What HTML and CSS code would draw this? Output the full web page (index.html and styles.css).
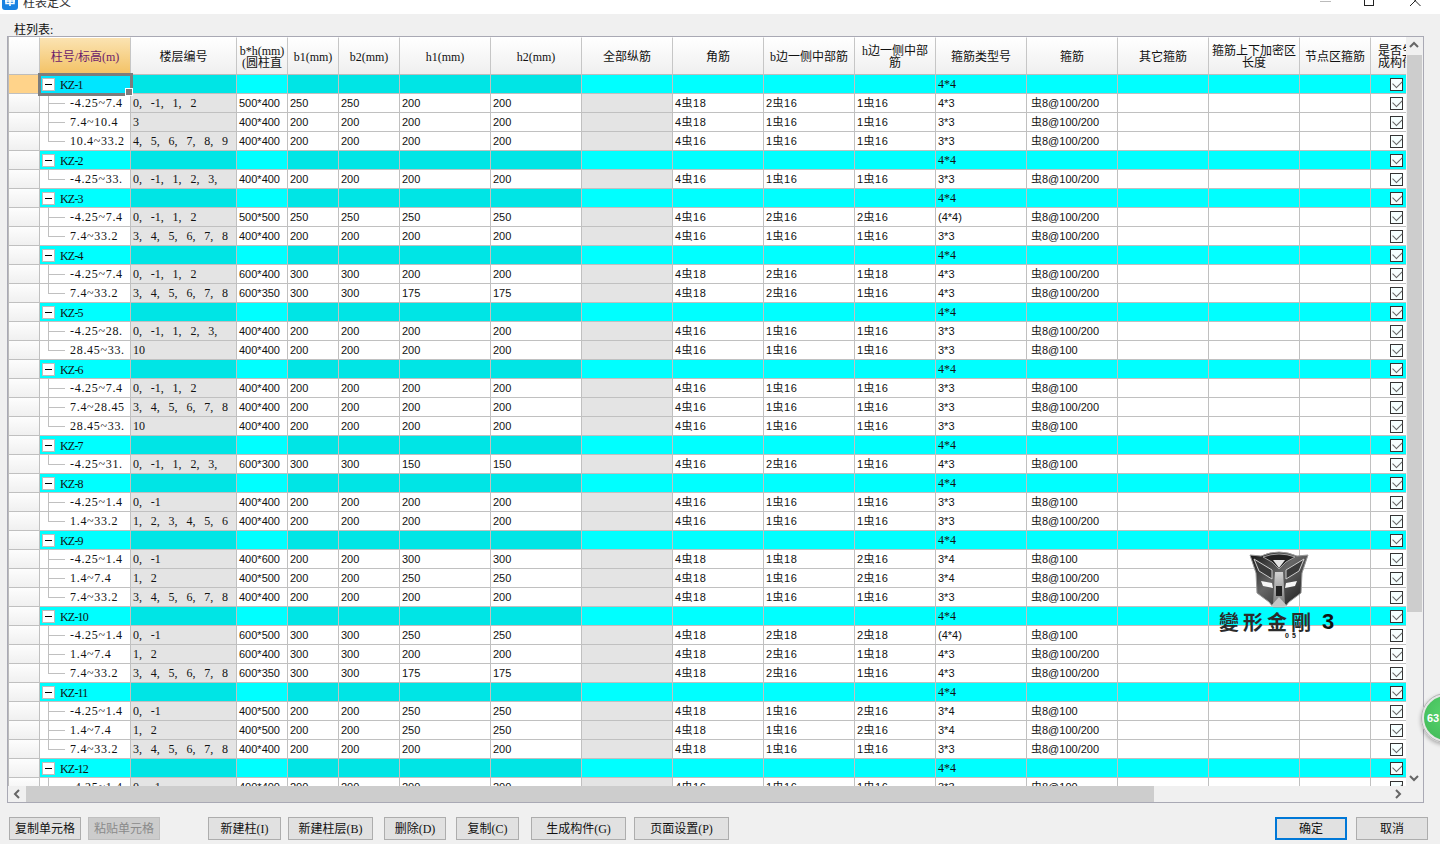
FILE: index.html
```html
<!DOCTYPE html>
<html lang="zh-CN">
<head>
<meta charset="utf-8">
<title>柱表定义</title>
<link rel="stylesheet" href="styles.css">
</head>
<body>
<header class="titlebar">
  <span class="app-icon"><svg width="16" height="16" viewBox="0 0 16 16"><rect width="16" height="16" rx="3" fill="#1a82e2"/><path d="M3 7h10M8 3v9M4 4.500h8v5H4z" fill="none" stroke="#fff" stroke-width="1.500"/></svg></span>
  <span class="title-text">柱表定义</span>
  <span class="win-controls">
    <span class="win-min"></span>
    <span class="win-max"></span>
    <svg class="win-close" width="11" height="16" viewBox="0 0 11 16"><path d="M0 5l10.500 10.500M10.500 5L0 15.500" transform="translate(0 -9.500)" fill="none" stroke="#222"/></svg>
  </span>
</header>
<div class="list-label">柱列表:</div>
<section class="frame">
  <div class="grid-view">
    <table class="sheet">
      <colgroup><col class="w31"><col class="w91"><col class="w106"><col class="w51"><col class="w51"><col class="w61"><col class="w91"><col class="w91"><col class="w91"><col class="w91"><col class="w91"><col class="w81"><col class="w91"><col class="w91"><col class="w91"><col class="w91"><col class="w71"><col class="w51"></colgroup>
      <thead><tr><th></th><th class="active-head">柱号/标高(m)</th><th>楼层编号</th><th>b*h(mm)<br>(圆柱直</th><th>b1(mm)</th><th>b2(mm)</th><th>h1(mm)</th><th>h2(mm)</th><th>全部纵筋</th><th>角筋</th><th>b边一侧中部筋</th><th>h边一侧中部<br>筋</th><th>箍筋类型号</th><th>箍筋</th><th>其它箍筋</th><th>箍筋上下加密区<br>长度</th><th>节点区箍筋</th><th>是否生<br>成构件</th></tr></thead>
      <tbody>
<tr class="g first"><th></th><td class="sel"><i class="box"></i>KZ-1</td><td></td><td></td><td></td><td></td><td></td><td></td><td></td><td></td><td></td><td></td><td>4*4</td><td></td><td></td><td></td><td></td><td><i class="cb"></i></td></tr>
<tr class="d"><th></th><td>-4.25~7.4</td><td>0, -1, 1, 2</td><td>500*400</td><td>250</td><td>250</td><td>200</td><td>200</td><td></td><td>4虫18</td><td>2虫16</td><td>1虫16</td><td>4*3</td><td>虫8@100/200</td><td></td><td></td><td></td><td><i class="cb"></i></td></tr>
<tr class="d"><th></th><td>7.4~10.4</td><td>3</td><td>400*400</td><td>200</td><td>200</td><td>200</td><td>200</td><td></td><td>4虫18</td><td>1虫16</td><td>1虫16</td><td>3*3</td><td>虫8@100/200</td><td></td><td></td><td></td><td><i class="cb"></i></td></tr>
<tr class="d l"><th></th><td>10.4~33.2</td><td>4, 5, 6, 7, 8, 9</td><td>400*400</td><td>200</td><td>200</td><td>200</td><td>200</td><td></td><td>4虫16</td><td>1虫16</td><td>1虫16</td><td>3*3</td><td>虫8@100/200</td><td></td><td></td><td></td><td><i class="cb"></i></td></tr>
<tr class="g"><th></th><td><i class="box"></i>KZ-2</td><td></td><td></td><td></td><td></td><td></td><td></td><td></td><td></td><td></td><td></td><td>4*4</td><td></td><td></td><td></td><td></td><td><i class="cb"></i></td></tr>
<tr class="d l"><th></th><td>-4.25~33.</td><td>0, -1, 1, 2, 3,</td><td>400*400</td><td>200</td><td>200</td><td>200</td><td>200</td><td></td><td>4虫16</td><td>1虫16</td><td>1虫16</td><td>3*3</td><td>虫8@100/200</td><td></td><td></td><td></td><td><i class="cb"></i></td></tr>
<tr class="g"><th></th><td><i class="box"></i>KZ-3</td><td></td><td></td><td></td><td></td><td></td><td></td><td></td><td></td><td></td><td></td><td>4*4</td><td></td><td></td><td></td><td></td><td><i class="cb"></i></td></tr>
<tr class="d"><th></th><td>-4.25~7.4</td><td>0, -1, 1, 2</td><td>500*500</td><td>250</td><td>250</td><td>250</td><td>250</td><td></td><td>4虫16</td><td>2虫16</td><td>2虫16</td><td>(4*4)</td><td>虫8@100/200</td><td></td><td></td><td></td><td><i class="cb"></i></td></tr>
<tr class="d l"><th></th><td>7.4~33.2</td><td>3, 4, 5, 6, 7, 8</td><td>400*400</td><td>200</td><td>200</td><td>200</td><td>200</td><td></td><td>4虫16</td><td>1虫16</td><td>1虫16</td><td>3*3</td><td>虫8@100/200</td><td></td><td></td><td></td><td><i class="cb"></i></td></tr>
<tr class="g"><th></th><td><i class="box"></i>KZ-4</td><td></td><td></td><td></td><td></td><td></td><td></td><td></td><td></td><td></td><td></td><td>4*4</td><td></td><td></td><td></td><td></td><td><i class="cb"></i></td></tr>
<tr class="d"><th></th><td>-4.25~7.4</td><td>0, -1, 1, 2</td><td>600*400</td><td>300</td><td>300</td><td>200</td><td>200</td><td></td><td>4虫18</td><td>2虫16</td><td>1虫18</td><td>4*3</td><td>虫8@100/200</td><td></td><td></td><td></td><td><i class="cb"></i></td></tr>
<tr class="d l"><th></th><td>7.4~33.2</td><td>3, 4, 5, 6, 7, 8</td><td>600*350</td><td>300</td><td>300</td><td>175</td><td>175</td><td></td><td>4虫18</td><td>2虫16</td><td>1虫16</td><td>4*3</td><td>虫8@100/200</td><td></td><td></td><td></td><td><i class="cb"></i></td></tr>
<tr class="g"><th></th><td><i class="box"></i>KZ-5</td><td></td><td></td><td></td><td></td><td></td><td></td><td></td><td></td><td></td><td></td><td>4*4</td><td></td><td></td><td></td><td></td><td><i class="cb"></i></td></tr>
<tr class="d"><th></th><td>-4.25~28.</td><td>0, -1, 1, 2, 3,</td><td>400*400</td><td>200</td><td>200</td><td>200</td><td>200</td><td></td><td>4虫16</td><td>1虫16</td><td>1虫16</td><td>3*3</td><td>虫8@100/200</td><td></td><td></td><td></td><td><i class="cb"></i></td></tr>
<tr class="d l"><th></th><td>28.45~33.</td><td>10</td><td>400*400</td><td>200</td><td>200</td><td>200</td><td>200</td><td></td><td>4虫16</td><td>1虫16</td><td>1虫16</td><td>3*3</td><td>虫8@100</td><td></td><td></td><td></td><td><i class="cb"></i></td></tr>
<tr class="g"><th></th><td><i class="box"></i>KZ-6</td><td></td><td></td><td></td><td></td><td></td><td></td><td></td><td></td><td></td><td></td><td>4*4</td><td></td><td></td><td></td><td></td><td><i class="cb"></i></td></tr>
<tr class="d"><th></th><td>-4.25~7.4</td><td>0, -1, 1, 2</td><td>400*400</td><td>200</td><td>200</td><td>200</td><td>200</td><td></td><td>4虫16</td><td>1虫16</td><td>1虫16</td><td>3*3</td><td>虫8@100</td><td></td><td></td><td></td><td><i class="cb"></i></td></tr>
<tr class="d"><th></th><td>7.4~28.45</td><td>3, 4, 5, 6, 7, 8</td><td>400*400</td><td>200</td><td>200</td><td>200</td><td>200</td><td></td><td>4虫16</td><td>1虫16</td><td>1虫16</td><td>3*3</td><td>虫8@100/200</td><td></td><td></td><td></td><td><i class="cb"></i></td></tr>
<tr class="d l"><th></th><td>28.45~33.</td><td>10</td><td>400*400</td><td>200</td><td>200</td><td>200</td><td>200</td><td></td><td>4虫16</td><td>1虫16</td><td>1虫16</td><td>3*3</td><td>虫8@100</td><td></td><td></td><td></td><td><i class="cb"></i></td></tr>
<tr class="g"><th></th><td><i class="box"></i>KZ-7</td><td></td><td></td><td></td><td></td><td></td><td></td><td></td><td></td><td></td><td></td><td>4*4</td><td></td><td></td><td></td><td></td><td><i class="cb"></i></td></tr>
<tr class="d l"><th></th><td>-4.25~31.</td><td>0, -1, 1, 2, 3,</td><td>600*300</td><td>300</td><td>300</td><td>150</td><td>150</td><td></td><td>4虫16</td><td>2虫16</td><td>1虫16</td><td>4*3</td><td>虫8@100</td><td></td><td></td><td></td><td><i class="cb"></i></td></tr>
<tr class="g"><th></th><td><i class="box"></i>KZ-8</td><td></td><td></td><td></td><td></td><td></td><td></td><td></td><td></td><td></td><td></td><td>4*4</td><td></td><td></td><td></td><td></td><td><i class="cb"></i></td></tr>
<tr class="d"><th></th><td>-4.25~1.4</td><td>0, -1</td><td>400*400</td><td>200</td><td>200</td><td>200</td><td>200</td><td></td><td>4虫16</td><td>1虫16</td><td>1虫16</td><td>3*3</td><td>虫8@100</td><td></td><td></td><td></td><td><i class="cb"></i></td></tr>
<tr class="d l"><th></th><td>1.4~33.2</td><td>1, 2, 3, 4, 5, 6</td><td>400*400</td><td>200</td><td>200</td><td>200</td><td>200</td><td></td><td>4虫16</td><td>1虫16</td><td>1虫16</td><td>3*3</td><td>虫8@100/200</td><td></td><td></td><td></td><td><i class="cb"></i></td></tr>
<tr class="g"><th></th><td><i class="box"></i>KZ-9</td><td></td><td></td><td></td><td></td><td></td><td></td><td></td><td></td><td></td><td></td><td>4*4</td><td></td><td></td><td></td><td></td><td><i class="cb"></i></td></tr>
<tr class="d"><th></th><td>-4.25~1.4</td><td>0, -1</td><td>400*600</td><td>200</td><td>200</td><td>300</td><td>300</td><td></td><td>4虫18</td><td>1虫18</td><td>2虫16</td><td>3*4</td><td>虫8@100</td><td></td><td></td><td></td><td><i class="cb"></i></td></tr>
<tr class="d"><th></th><td>1.4~7.4</td><td>1, 2</td><td>400*500</td><td>200</td><td>200</td><td>250</td><td>250</td><td></td><td>4虫18</td><td>1虫16</td><td>2虫16</td><td>3*4</td><td>虫8@100/200</td><td></td><td></td><td></td><td><i class="cb"></i></td></tr>
<tr class="d l"><th></th><td>7.4~33.2</td><td>3, 4, 5, 6, 7, 8</td><td>400*400</td><td>200</td><td>200</td><td>200</td><td>200</td><td></td><td>4虫18</td><td>1虫16</td><td>1虫16</td><td>3*3</td><td>虫8@100/200</td><td></td><td></td><td></td><td><i class="cb"></i></td></tr>
<tr class="g"><th></th><td><i class="box"></i>KZ-10</td><td></td><td></td><td></td><td></td><td></td><td></td><td></td><td></td><td></td><td></td><td>4*4</td><td></td><td></td><td></td><td></td><td><i class="cb"></i></td></tr>
<tr class="d"><th></th><td>-4.25~1.4</td><td>0, -1</td><td>600*500</td><td>300</td><td>300</td><td>250</td><td>250</td><td></td><td>4虫18</td><td>2虫18</td><td>2虫18</td><td>(4*4)</td><td>虫8@100</td><td></td><td></td><td></td><td><i class="cb"></i></td></tr>
<tr class="d"><th></th><td>1.4~7.4</td><td>1, 2</td><td>600*400</td><td>300</td><td>300</td><td>200</td><td>200</td><td></td><td>4虫18</td><td>2虫16</td><td>1虫18</td><td>4*3</td><td>虫8@100/200</td><td></td><td></td><td></td><td><i class="cb"></i></td></tr>
<tr class="d l"><th></th><td>7.4~33.2</td><td>3, 4, 5, 6, 7, 8</td><td>600*350</td><td>300</td><td>300</td><td>175</td><td>175</td><td></td><td>4虫18</td><td>2虫16</td><td>1虫16</td><td>4*3</td><td>虫8@100/200</td><td></td><td></td><td></td><td><i class="cb"></i></td></tr>
<tr class="g"><th></th><td><i class="box"></i>KZ-11</td><td></td><td></td><td></td><td></td><td></td><td></td><td></td><td></td><td></td><td></td><td>4*4</td><td></td><td></td><td></td><td></td><td><i class="cb"></i></td></tr>
<tr class="d"><th></th><td>-4.25~1.4</td><td>0, -1</td><td>400*500</td><td>200</td><td>200</td><td>250</td><td>250</td><td></td><td>4虫18</td><td>1虫16</td><td>2虫16</td><td>3*4</td><td>虫8@100</td><td></td><td></td><td></td><td><i class="cb"></i></td></tr>
<tr class="d"><th></th><td>1.4~7.4</td><td>1, 2</td><td>400*500</td><td>200</td><td>200</td><td>250</td><td>250</td><td></td><td>4虫18</td><td>1虫16</td><td>2虫16</td><td>3*4</td><td>虫8@100/200</td><td></td><td></td><td></td><td><i class="cb"></i></td></tr>
<tr class="d l"><th></th><td>7.4~33.2</td><td>3, 4, 5, 6, 7, 8</td><td>400*400</td><td>200</td><td>200</td><td>200</td><td>200</td><td></td><td>4虫18</td><td>1虫16</td><td>1虫16</td><td>3*3</td><td>虫8@100/200</td><td></td><td></td><td></td><td><i class="cb"></i></td></tr>
<tr class="g"><th></th><td><i class="box"></i>KZ-12</td><td></td><td></td><td></td><td></td><td></td><td></td><td></td><td></td><td></td><td></td><td>4*4</td><td></td><td></td><td></td><td></td><td><i class="cb"></i></td></tr>
<tr class="d"><th></th><td>-4.25~1.4</td><td>0, -1</td><td>400*400</td><td>200</td><td>200</td><td>200</td><td>200</td><td></td><td>4虫16</td><td>1虫16</td><td>1虫16</td><td>3*3</td><td>虫8@100</td><td></td><td></td><td></td><td><i class="cb"></i></td></tr>
      </tbody>
    </table>
  </div>
  <div class="vscroll">
    <svg class="arrow" width="16" height="16" viewBox="0 0 16 16"><path d="M4 10l4-4 4 4" fill="none" stroke="#666" stroke-width="2"/></svg>
    <div class="vthumb"></div>
    <div class="spacer"></div>
    <svg class="arrow" width="16" height="16" viewBox="0 0 16 16"><path d="M4 6l4 4 4-4" fill="none" stroke="#666" stroke-width="2"/></svg>
  </div>
  <div class="hscroll">
    <svg class="arrow" width="17" height="16" viewBox="0 0 17 16"><path d="M10 4L6 8l4 4" fill="none" stroke="#666" stroke-width="2"/></svg>
    <div class="hthumb"></div>
    <div class="spacer"></div>
    <svg class="arrow" width="17" height="16" viewBox="0 0 17 16"><path d="M7 4l4 4-4 4" fill="none" stroke="#666" stroke-width="2"/></svg>
  </div>
</section>
<footer class="actions">
  <button class="btn a1">复制单元格</button>
  <button class="btn a2" disabled>粘贴单元格</button>
  <button class="btn a3">新建柱(I)</button>
  <button class="btn a4">新建柱层(B)</button>
  <button class="btn a5">删除(D)</button>
  <button class="btn a6">复制(C)</button>
  <button class="btn a7">生成构件(G)</button>
  <button class="btn a8">页面设置(P)</button>
  <button class="btn a9">确定</button>
  <button class="btn a10">取消</button>
</footer>
<div class="logo">
  <svg class="shield" width="60" height="57" viewBox="0 0 60 57">
    <defs>
      <linearGradient id="metal" x1="0" y1="0" x2="1" y2="1"><stop offset="0" stop-color="#111"/><stop offset=".45" stop-color="#666"/><stop offset="1" stop-color="#161616"/></linearGradient>
      <linearGradient id="silver" x1="0" y1="0" x2="0" y2="1"><stop offset="0" stop-color="#eee"/><stop offset="1" stop-color="#888"/></linearGradient>
    </defs>
    <path d="M1 4L12 5Q30-3 48 5L59 4 53 22 52 42 40 51 36 56H24L20 51 8 42 7 22Z" fill="url(#metal)" stroke="#999"/>
    <path d="M14 6Q30 0 46 6L37 11 30 18 23 11Z" fill="#222" stroke="#bbb" stroke-width=".8"/>
    <path d="M24 9h12l-6 8z" fill="#e4e4e4"/>
    <path d="M5 8l18 11v9L10 20zM55 8L37 19v9l13-8z" fill="#3a3a3a" stroke="#ccc"/>
    <path d="M26 21h8l2 32h-12z" fill="url(#silver)" opacity=".8"/>
    <path d="M12 30l11 2 1 5-10-2zM48 30l-11 2-1 5 10-2z" fill="#f6f6f6"/>
    <path d="M21 56l9-10 9 10z" fill="#c4c4c4"/>
    <path d="M27 35h6v10h-6z" fill="#222"/>
  </svg>
  <div class="logo-title"><span>變形金剛</span><b>3</b></div>
  <div class="logo-sub">05</div>
</div>
<div class="badge">63</div>
</body>
</html>
```
FILE: styles.css
```css
* { box-sizing: border-box; }
html, body { margin: 0; height: 844px; overflow: hidden; }
body {
  position: relative;
  background: #f0f0f0;
  color: #111;
  font: 12px "Liberation Serif", "Noto Sans CJK SC", serif;
}
.titlebar {
  height: 14px;
  background: #fff;
  display: flex;
  align-items: flex-end;
  overflow: hidden;
}
.app-icon { display: block; height: 16px; margin: 0 0 4px 2px; }
.app-icon svg { display: block; }
.title-text { margin: 0 0 3px 5px; font-size: 12px; line-height: 16px; color: #333; }
.win-controls { margin-left: auto; display: flex; align-items: flex-end; height: 14px; }
.win-min { width: 11px; height: 1px; background: #bbb; margin: 0 0 12px 0; }
.win-max { width: 10px; height: 10px; border: 1px solid #222; margin: 0 0 8px 33px; }
.win-close { margin: 0 19px 0 36px; align-self: flex-start; }

.list-label { height: 22px; padding: 10px 0 0 14px; line-height: 12px; font-size: 12px; }

.frame {
  margin-left: 7px;
  width: 1417px;
  height: 767px;
  border: 1px solid #a9a9b4;
  display: grid;
  grid-template-columns: 1398px 1fr;
  grid-template-rows: 749px 16px;
  background: #f0f0f0;
}
.grid-view { overflow: hidden; background: #fff; border-left: 1px solid #bbb; }
.sheet { border-collapse: separate; border-spacing: 0; table-layout: fixed; width: 1413px; }
.w31 { width: 31px; } .w51 { width: 51px; } .w61 { width: 61px; } .w71 { width: 71px; }
.w81 { width: 81px; } .w91 { width: 91px; } .w106 { width: 106px; }

.sheet th, .sheet td {
  padding: 0;
  border-right: 1px solid #c0c0c0;
  border-bottom: 1px solid #c0c0c0;
  font-weight: 400;
  overflow: hidden;
  white-space: nowrap;
}
.sheet thead th {
  height: 38px;
  padding-top: 1px;
  line-height: 12px;
  text-align: center;
  background: linear-gradient(#fff, #efefef);
  border-top: 1px solid #fff;
  border-right: 1px solid #c6c6c6;
  border-bottom: 1px solid #bdbdbd;
}
.sheet thead th.active-head { background: linear-gradient(#fbe3b2, #f3c265); color: #6b1b6b; }
.sheet tbody th { height: 19px; background: linear-gradient(#fdfdfd, #f0f0f0); }
.sheet tbody td { height: 19px; line-height: 18px; padding-left: 2px; }

tr.d td { background: #fff; font: 11px/18px "Liberation Sans", "Noto Sans CJK SC", sans-serif; }
tr.d td:nth-child(3), tr.d td:nth-child(9) { background: #e4e4e4; }
tr.d td:nth-child(2) {
  padding-left: 30px;
  font: 12px/18px "Liberation Serif", "Noto Sans CJK SC", serif;
  letter-spacing: .7px;
  background:
    linear-gradient(#c0c0c0, #c0c0c0) 8px 9px / 17px 1px no-repeat,
    linear-gradient(#c0c0c0, #c0c0c0) 8px 0 / 1px 100% no-repeat,
    #fff;
}
tr.d.l td:nth-child(2) {
  background:
    linear-gradient(#c0c0c0, #c0c0c0) 8px 9px / 17px 1px no-repeat,
    linear-gradient(#c0c0c0, #c0c0c0) 8px 0 / 1px 10px no-repeat,
    #fff;
}
tr.d td:nth-child(3) { font: 12px/18px "Liberation Serif", serif; word-spacing: 5.8px; }
tr.d td:nth-child(10), tr.d td:nth-child(11), tr.d td:nth-child(12) { letter-spacing: .5px; }
tr.d td:nth-child(14) { padding-left: 4px; }

tr.g td { background: #00ffff; font-size: 12px; }
tr.g td:nth-child(3), tr.g td:nth-child(n+5):nth-child(-n+8) { background: #00e5e5; }
.sheet tr.g td:nth-child(2) {
  font-size: 12px;
  line-height: 16px;
  padding-left: 2px;
  padding-top: 2px;
  letter-spacing: -.8px;
}
tr.first th { background: #ffd38a; }
.sheet tr.g td.sel { position: relative; background: #00e6ff; outline: 3px solid #7d7d7d; outline-offset: -1px; overflow: visible; }
td.sel::after {
  content: "";
  position: absolute;
  right: -3px;
  bottom: -3px;
  width: 6px;
  height: 6px;
  background: #7d7d7d;
  border: 1px solid #fff;
  z-index: 2;
}

.box {
  display: inline-block;
  vertical-align: -2px;
  width: 13px;
  height: 13px;
  margin-right: 5px;
  border: 1px solid #bdbdbd;
  background: linear-gradient(#000, #000) center / 7px 1px no-repeat, #fff;
}
.sheet td:last-child { padding-left: 19px; }
.cb {
  display: block;
  position: relative;
  width: 13px;
  height: 13px;
  margin-top: 1px;
  border: 1px solid #333;
  background: #f6ffff;
}
.cb::after {
  content: "";
  position: absolute;
  left: 2px;
  top: 1px;
  width: 8px;
  height: 5px;
  border-left: 1px solid #666;
  border-bottom: 1px solid #666;
  transform: rotate(-45deg);
}

.vscroll { display: flex; flex-direction: column; align-items: center; width: 16px; margin-left: 0; }
.vthumb { width: 15px; height: 557px; margin-top: 2px; background: #cdcdcd; flex: none; }
.spacer { flex: 1; }
.vscroll .arrow { display: block; flex: none; }
.hscroll { grid-column: 1 / 3; display: flex; align-items: stretch; padding-left: 1px; padding-right: 17px; }
.hscroll .arrow { flex: none; }
.hthumb { width: 1128px; height: 16px; background: #cdcdcd; }

.actions { display: flex; align-items: flex-start; margin-top: 14px; padding-left: 9px; }
.btn {
  flex: none;
  height: 23px;
  padding: 0;
  border: 1px solid #adadad;
  background: #e1e1e1;
  color: #111;
  font: 12px/20px "Liberation Serif", "Noto Sans CJK SC", serif;
}
.btn:disabled { background: #cccccc; color: #8a8a8a; border-color: #bfbfbf; }
.a1, .a2 { width: 72px; }
.a2 { margin-left: 7px; }
.a3 { width: 73px; margin-left: 48px; }
.a4 { width: 85px; margin-left: 7px; }
.a5 { width: 62px; margin-left: 11px; }
.a6 { width: 63px; margin-left: 10px; }
.a7 { width: 95px; margin-left: 12px; }
.a8 { width: 95px; margin-left: 8px; }
.a9 { width: 72px; margin-left: auto; border: 2px solid #0078d7; }
.a10 { width: 72px; margin-left: 9px; margin-right: 12px; }

.logo { position: absolute; left: 1219px; top: 551px; width: 120px; height: 90px; }
.shield { display: block; margin-left: 30px; }
.logo-title {
  display: flex;
  align-items: center;
  height: 21px;
  margin-top: 3px;
  font: 700 20px/21px "Noto Sans CJK SC", sans-serif;
  letter-spacing: 4px;
  color: #2b2b2b;
}
.logo-title span { width: 103px; white-space: nowrap; }
.logo-title b { font: 900 22px/21px "Liberation Sans", sans-serif; color: #111; }
.logo-sub { margin: 1px 0 0 66px; font: 700 7px/6px "Liberation Sans", sans-serif; letter-spacing: 3px; color: #111; }

.badge {
  position: absolute;
  left: 1421px;
  top: 693px;
  width: 50px;
  height: 50px;
  padding-left: 3px;
  border-radius: 50%;
  border: 3px solid #e6e6e6;
  outline: 1px solid #b5b5b5;
  outline-offset: -1px;
  background: radial-gradient(circle at 50% 40%, #58d56e, #3fb655);
  color: #fff;
  font: 700 11px/44px "Liberation Sans", sans-serif;
  box-shadow: 0 2px 4px rgba(0,0,0,.3);
}
```
